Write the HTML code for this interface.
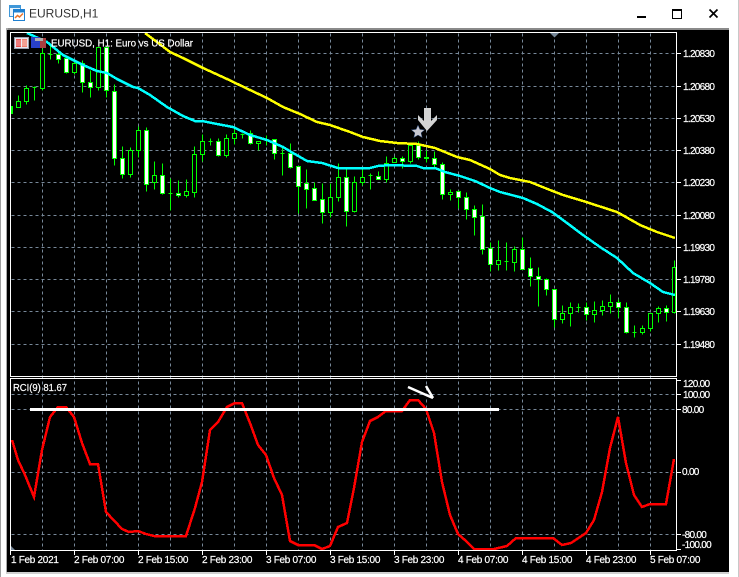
<!DOCTYPE html>
<html><head><meta charset="utf-8"><title>EURUSD,H1</title>
<style>
html,body{margin:0;padding:0;background:#fff;width:739px;height:577px;overflow:hidden}
svg{display:block;position:absolute;left:0;top:0}
text{font-family:"Liberation Sans",sans-serif;font-size:10px;fill:#fff;stroke:#fff;stroke-width:.2px}
</style></head><body>
<svg width="739" height="577" viewBox="0 0 739 577" xmlns="http://www.w3.org/2000/svg">
<rect width="739" height="577" fill="#fff"/>
<rect x="0" y="0" width="1" height="577" fill="#a0a0a0"/>
<rect x="738" y="0" width="1" height="577" fill="#c8c8c8"/>
<rect x="6" y="28" width="723" height="2" fill="#8a8a8a"/>
<rect x="6" y="28" width="2" height="545" fill="#a8a8a8"/>
<rect x="6" y="572" width="723" height="2" fill="#d0d0d0"/>
<rect x="7" y="30" width="722" height="542" fill="#000"/>
<!-- title icon -->
<rect x="9.5" y="5.5" width="11" height="11" fill="#e8f3fb" stroke="#3f97d8"/>
<rect x="10" y="6" width="10" height="2" fill="#3f97d8"/>
<rect x="13.5" y="9.5" width="11" height="11" fill="#fff" stroke="#1f80d0"/>
<rect x="14" y="10" width="10" height="2.5" fill="#1f80d0"/>
<path d="M15 18l2.500-2.500 2 1.500 3.500-3.500" fill="none" stroke="#e8742c" stroke-width="1.500"/>
<text x="29" y="17.500" style="font-size:12px;fill:#333;stroke:none">EURUSD,H1</text>
<!-- window controls -->
<rect x="637" y="16" width="9" height="2" fill="#000"/>
<rect x="672.500" y="9.500" width="9" height="9" fill="none" stroke="#000"/>
<rect x="672" y="9" width="10" height="2" fill="#000"/>
<path d="M709.500 9.500l8 8M717.500 9.500l-8 8" stroke="#000" stroke-width="1.700" fill="none"/>
<!-- grid -->
<g transform="translate(.5 .5)" shape-rendering="crispEdges" fill="none">
<path stroke="#778899" stroke-dasharray="3 3" d="M42 33V550M74 33V550M106 33V550M138 33V550M170 33V550M202 33V550M234 33V550M266 33V550M298 33V550M330 33V550M362 33V550M394 33V550M426 33V550M458 33V550M490 33V550M522 33V550M554 33V550M586 33V550M618 33V550M650 33V550"/>
<path stroke="#778899" stroke-dasharray="3 3" d="M11 53H676M11 86H676M11 118H676M11 150H676M11 182H676M11 215H676M11 247H676M11 279H676M11 311H676M11 344H676M11 394H676M11 409H676M11 472H676M11 534H676"/>
<!-- wicks -->
<path stroke="#00ff00" d="M18 95V107M26 85V104M34 86V100M42 48V90M50 45V59M58 52V63M66 56V73M74 60V74M82 60V92M90 70V97M98 47V90M106 47V97M114 84V165M122 146V178M130 147V177M138 126V157M146 127V191M154 161V189M162 163V194M170 178V210M178 180V197M186 179V197M194 146V197M202 134V161M210 138V145M218 138V156M226 134V157M234 128V144M242 133V138M250 130V144M258 141V150M266 135V145M274 139V159M282 146V175M290 143V168M298 166V213M306 169V208M314 182V200M322 183V223M330 183V217M338 163V201M346 168V226M354 176V212M362 167V185M370 173V189M378 171V179M386 156V182M394 156V162M402 156V168M410 143V163M418 141V159M426 150V162M434 151V167M442 162V199M450 189V200M458 190V208M466 192V219M474 205V235M482 204V254M490 242V271M498 240V270M506 242V270M514 246V271M522 237V269M530 257V286M538 267V306M546 278V295M554 289V327M562 305V323M570 302V326M578 303V312M586 302V320M594 301V322M602 300V315M610 294V313M618 299V317M626 302V333M634 325V337M642 325V334M650 313V331M658 306V322M666 305V321M674 260V313"/>
<!-- doji -->
<path stroke="#00ff00" d="M32 87H36M48 54H52M168 193H172M208 141H212M240 134H244M264 140H268M280 153H284M368 175H372M504 261H508M576 307H580M632 332H636"/>
<!-- hollow bodies -->
<g stroke="#00ff00" fill="#000">
<path d="M11 106H12V113H11z"/>
<rect x="16" y="101" width="4" height="6"/><rect x="24" y="88" width="4" height="13"/><rect x="40" y="53" width="4" height="35"/><rect x="72" y="63" width="4" height="9"/><rect x="96" y="47" width="4" height="40"/><rect x="128" y="150" width="4" height="24"/><rect x="136" y="130" width="4" height="20"/><rect x="152" y="175" width="4" height="7"/><rect x="184" y="191" width="4" height="4"/><rect x="192" y="154" width="4" height="38"/><rect x="200" y="141" width="4" height="13"/><rect x="224" y="138" width="4" height="17"/><rect x="232" y="133" width="4" height="5"/><rect x="256" y="141" width="4" height="2"/><rect x="328" y="197" width="4" height="15"/><rect x="336" y="177" width="4" height="20"/><rect x="352" y="182" width="4" height="29"/><rect x="360" y="177" width="4" height="5"/><rect x="384" y="163" width="4" height="16"/><rect x="392" y="158" width="4" height="4"/><rect x="408" y="145" width="4" height="16"/><rect x="448" y="192" width="4" height="2"/><rect x="496" y="260" width="4" height="4"/><rect x="512" y="249" width="4" height="13"/><rect x="560" y="313" width="4" height="6"/><rect x="568" y="307" width="4" height="6"/><rect x="592" y="310" width="4" height="4"/><rect x="600" y="306" width="4" height="4"/><rect x="608" y="302" width="4" height="4"/><rect x="640" y="328" width="4" height="4"/><rect x="648" y="313" width="4" height="15"/><rect x="656" y="308" width="4" height="5"/><rect x="672" y="267" width="3" height="45"/>
</g>
<!-- white bodies -->
<g stroke="#00ff00" fill="#fff">
<rect x="56" y="54" width="4" height="5"/><rect x="64" y="58" width="4" height="14"/><rect x="80" y="63" width="4" height="19"/><rect x="88" y="82" width="4" height="5"/><rect x="104" y="47" width="4" height="43"/><rect x="112" y="91" width="4" height="67"/><rect x="120" y="158" width="4" height="16"/><rect x="144" y="130" width="4" height="54"/><rect x="160" y="175" width="4" height="18"/><rect x="176" y="193" width="4" height="2"/><rect x="216" y="141" width="4" height="14"/><rect x="248" y="133" width="4" height="10"/><rect x="272" y="139" width="4" height="14"/><rect x="288" y="153" width="4" height="14"/><rect x="296" y="166" width="4" height="20"/><rect x="304" y="183" width="4" height="6"/><rect x="312" y="188" width="4" height="12"/><rect x="320" y="199" width="4" height="13"/><rect x="344" y="177" width="4" height="34"/><rect x="376" y="176" width="4" height="3"/><rect x="400" y="158" width="4" height="3"/><rect x="416" y="145" width="4" height="12"/><rect x="424" y="157" width="4" height="1"/><rect x="432" y="158" width="4" height="6"/><rect x="440" y="164" width="4" height="30"/><rect x="456" y="191" width="4" height="6"/><rect x="464" y="197" width="4" height="12"/><rect x="472" y="209" width="4" height="8"/><rect x="480" y="216" width="4" height="33"/><rect x="488" y="248" width="4" height="16"/><rect x="520" y="249" width="4" height="20"/><rect x="528" y="268" width="4" height="8"/><rect x="536" y="276" width="4" height="3"/><rect x="544" y="279" width="4" height="10"/><rect x="552" y="289" width="4" height="30"/><rect x="584" y="307" width="4" height="7"/><rect x="616" y="302" width="4" height="5"/><rect x="624" y="307" width="4" height="25"/><rect x="664" y="308" width="4" height="4"/>
</g>
</g>
<!-- moving averages -->
<g fill="none" stroke-width="2.500" shape-rendering="crispEdges">
<polyline stroke="#ffff00" points="145,33 157,42 170,52 183,58 203,68 227,79 250,90 267,98 283,107 300,114 317,122 330,125 350,132 363,137 380,141 397,143 417,144 435,148 457,157 470,160 490,169 500,175 510,178 530,182 550,190 563,195 583,201 617,212 640,225 657,232 675,238"/>
<polyline stroke="#00ffff" points="27,33 47,42 63,55 83,65 97,71 107,73 117,79 133,87 138,88 150,95 167,107 183,116 195,121 202,121 217,124 233,127 250,135 267,140 283,147 293,153 307,161 322,163 338,168 370,168 378,166 390,165 417,166 423,168 435,168 445,172 460,176 475,181 490,188 500,192 523,198 537,204 552,212 567,223 583,235 600,247 617,258 633,273 650,283 663,292 675,295"/>
<polyline stroke="#ff0000" points="12,440 18,460 25,475 34,497 42,450 50,417 58,407 66,407 74,417 82,443 90,464 98,464 106,512 122,529 129,532 138,531 146,534 154,536 186,536 195,508 202,482 210,430 218,422 227,407 235,403 242,403 250,423 258,445 266,455 274,478 282,495 290,541 298,545 314,545 322,549 330,546 338,527 347,523 354,488 362,442 370,421 378,417 386,411 402,411 410,400 418,400 426,409 434,433 442,482 450,515 458,534 466,541 474,549 494,549 507,546 516,538 553,538 562,545 571,543 586,533 594,520 602,492 610,448 618,417 626,463 634,495 642,507 650,504 666,504 674,459"/>
</g>
<!-- frames -->
<g fill="none" stroke="#fff" shape-rendering="crispEdges">
<rect x="10.500" y="32.500" width="666" height="344"/>
<rect x="10.500" y="378.500" width="666" height="172"/>
</g>
<path d="M550 33h9l-4.500 4.500z" fill="#778899"/>
<path d="M11 546l4 4h-4z" fill="#778899"/>
<!-- drawings -->
<rect x="30" y="408" width="469" height="3" fill="#fff"/>
<path d="M408 387l25 11M426 386l7 12" stroke="#fff" stroke-width="2.500" fill="none"/>
<path d="M424 108h7v13l6-6v5l-10 11-9-11v-5l6 6z" fill="#d4d4d4"/>
<path d="M418 125l1.900 4.400 4.800.4-3.600 3.100 1.100 4.700-4.200-2.500-4.200 2.500 1.100-4.700-3.600-3.100 4.800-.4z" fill="#c9c9d2" stroke="#23406e" stroke-width=".5"/>
<!-- legend icons -->
<rect x="14.500" y="37.500" width="14" height="11" fill="#e8e8f0" stroke="#9aa0b0"/>
<rect x="16" y="39" width="5" height="8" fill="#e85050"/>
<rect x="22" y="39" width="5" height="8" fill="#f08070"/>
<path d="M16 41h11M16 43h11M16 45h11" stroke="#fff" stroke-width=".6"/>
<rect x="31" y="37" width="9" height="11" fill="#2840c8"/>
<rect x="40" y="38" width="6" height="10" fill="#a84040"/>
<rect x="35" y="38" width="8" height="3" fill="#b0b0b0"/>
<!-- legend text -->
<text x="51" y="46.500" textLength="142" lengthAdjust="spacingAndGlyphs">EURUSD, H1:  Euro vs US Dollar</text>
<text x="13" y="391" textLength="54" lengthAdjust="spacingAndGlyphs">RCI(9) 81.67</text>
<!-- price scale -->
<path d="M677 53.500h4M677 86.500h4M677 118.500h4M677 150.500h4M677 182.500h4M677 215.500h4M677 247.500h4M677 279.500h4M677 311.500h4M677 344.500h4M677 380.500h4M677 394.500h4M677 409.500h4M677 472.500h4M677 534.500h4M677 549.500h4" stroke="#fff" fill="none" shape-rendering="crispEdges"/>
<g style="letter-spacing:-.7px">
<text x="683" y="57">1.20830</text><text x="683" y="90">1.20680</text><text x="683" y="122">1.20530</text><text x="683" y="154">1.20380</text><text x="683" y="186">1.20230</text><text x="683" y="219">1.20080</text><text x="683" y="251">1.19930</text><text x="683" y="283">1.19780</text><text x="683" y="315">1.19630</text><text x="683" y="348">1.19480</text>
<text x="683" y="387">120.00</text><text x="683" y="398">100.00</text><text x="682" y="413">80.00</text><text x="682" y="475">0.00</text><text x="682" y="538">-80.00</text><text x="682" y="548">-100.00</text>
</g>
<!-- time scale -->
<path d="M10.500 550v5M74.500 550v5M138.500 550v5M202.500 550v5M266.500 550v5M330.500 550v5M394.500 550v5M458.500 550v5M522.500 550v5M586.500 550v5M650.500 550v5" stroke="#fff" fill="none" shape-rendering="crispEdges"/>
<g style="letter-spacing:-.3px">
<text x="11" y="563">1 Feb 2021</text><text x="74" y="563">2 Feb 07:00</text><text x="138" y="563">2 Feb 15:00</text><text x="202" y="563">2 Feb 23:00</text><text x="266" y="563">3 Feb 07:00</text><text x="330" y="563">3 Feb 15:00</text><text x="394" y="563">3 Feb 23:00</text><text x="458" y="563">4 Feb 07:00</text><text x="522" y="563">4 Feb 15:00</text><text x="586" y="563">4 Feb 23:00</text><text x="650" y="563">5 Feb 07:00</text>
</g>
</svg>
</body></html>
